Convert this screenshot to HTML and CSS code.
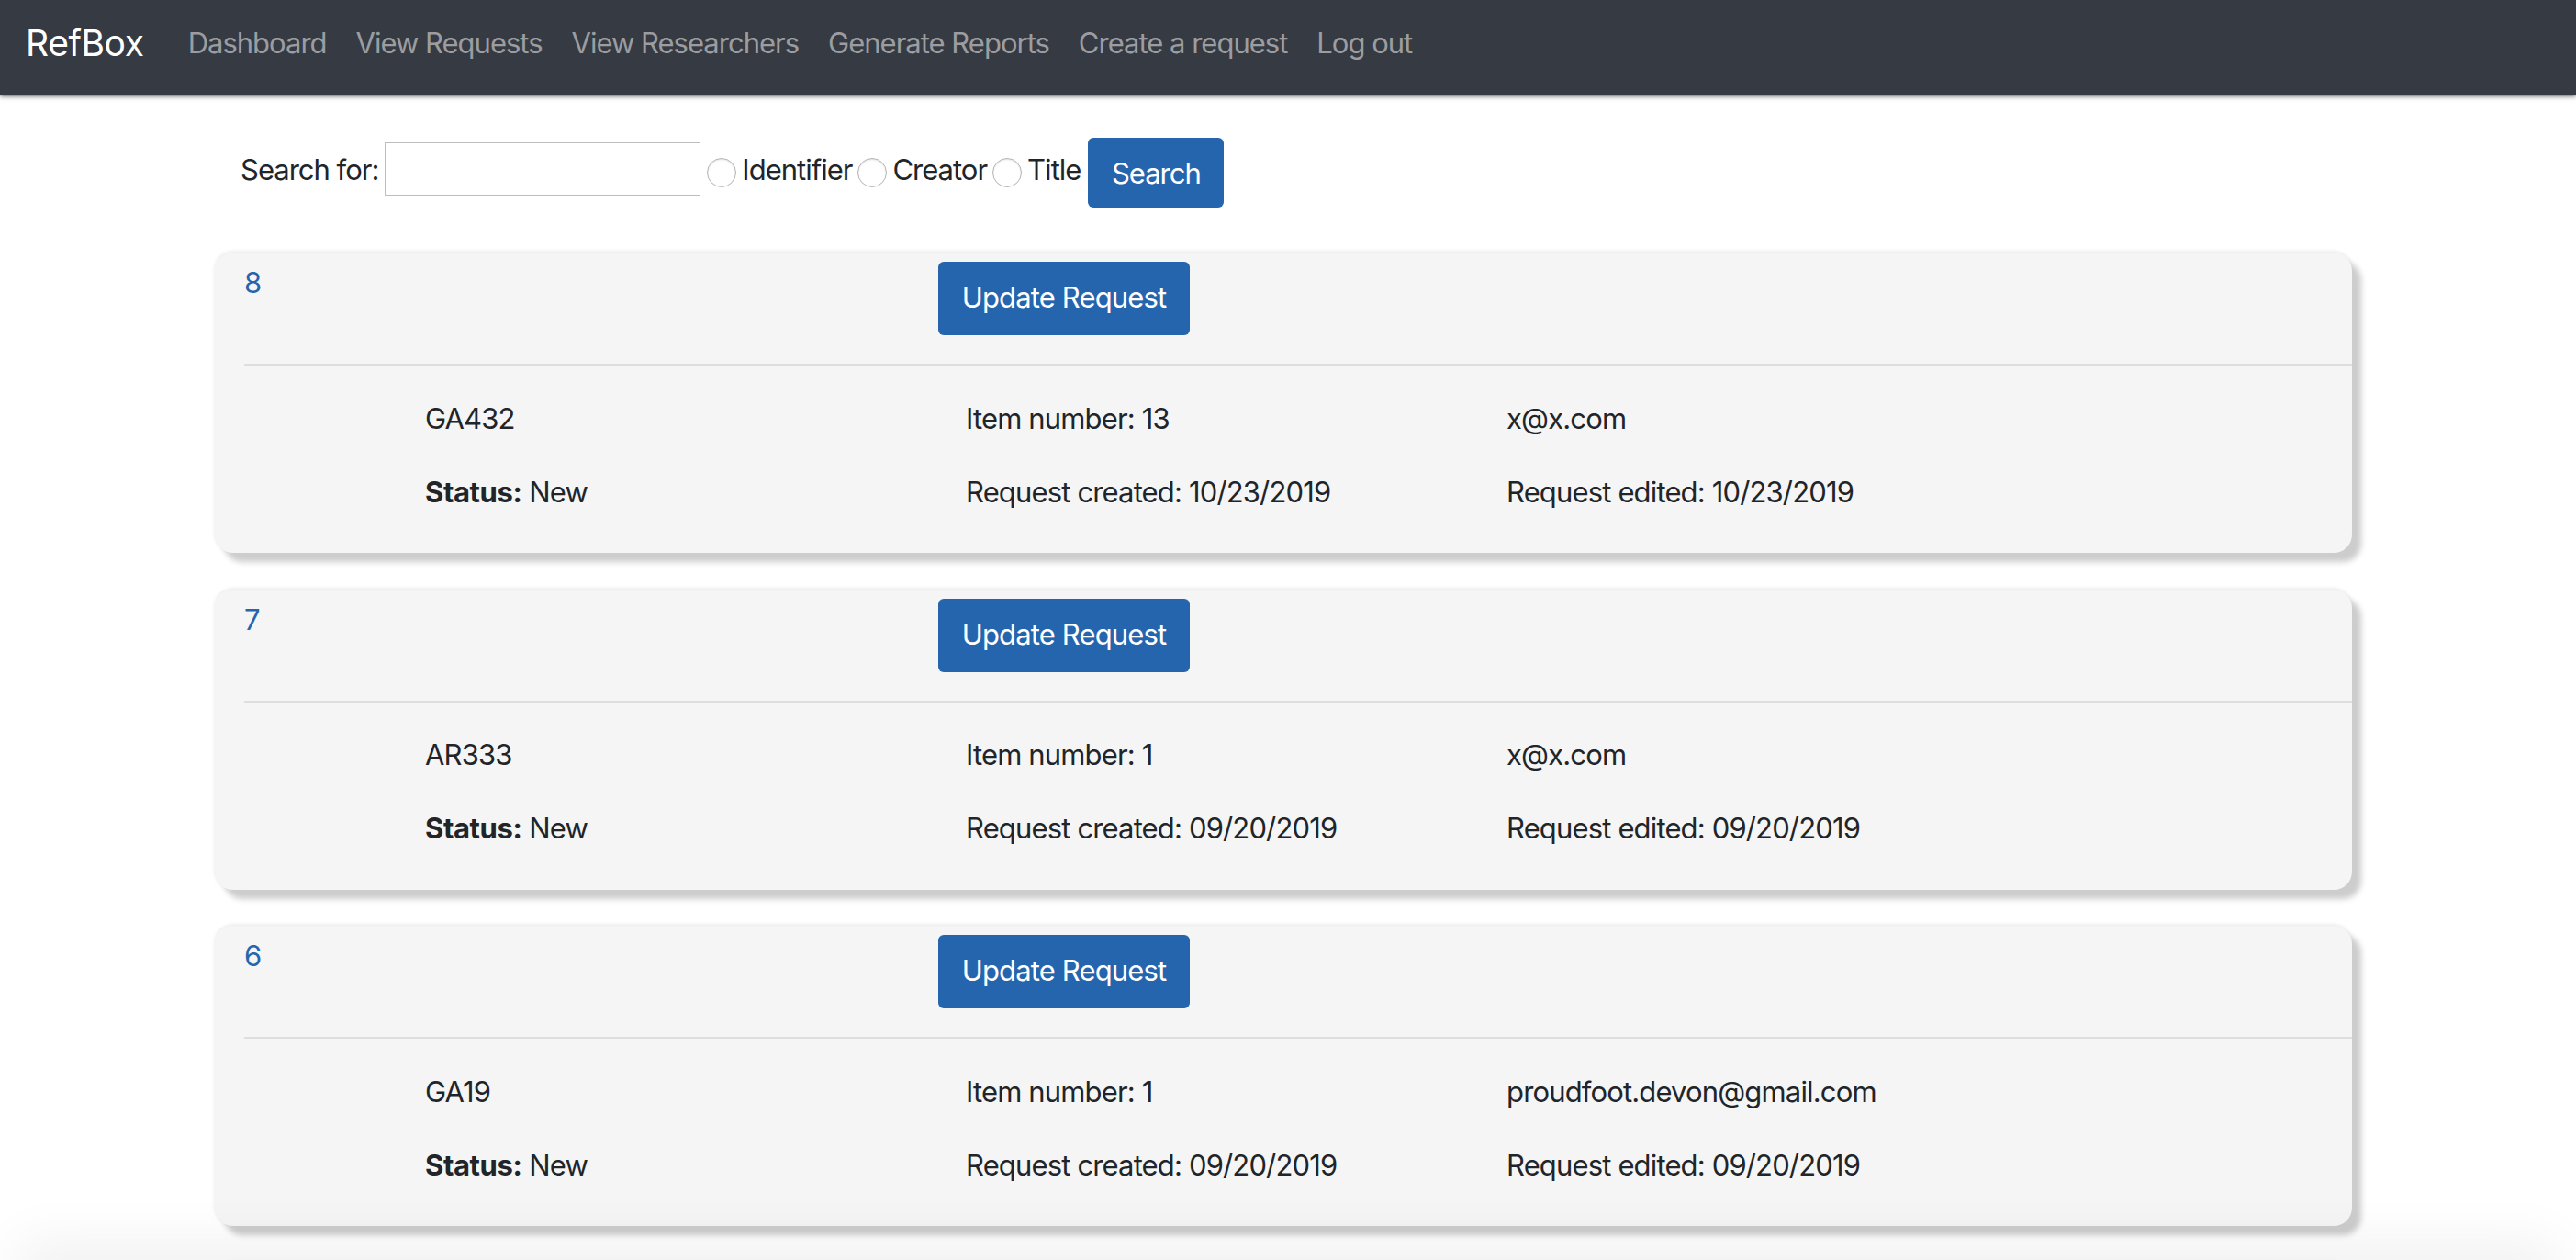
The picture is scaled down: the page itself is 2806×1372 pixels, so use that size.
FILE: index.html
```html
<!DOCTYPE html>
<html lang="en">
<head>
<meta charset="utf-8">
<title>RefBox</title>
<link rel="stylesheet" href="styles.css">
</head>
<body>
<nav class="navbar">
  <a class="brand" href="#">RefBox</a>
  <a class="nav-link" href="#">Dashboard</a>
  <a class="nav-link" href="#">View Requests</a>
  <a class="nav-link" href="#">View Researchers</a>
  <a class="nav-link" href="#">Generate Reports</a>
  <a class="nav-link" href="#">Create a request</a>
  <a class="nav-link" href="#">Log out</a>
</nav>
<main class="content">
  <form class="search">
    <label class="search-label" for="q">Search for:</label>
    <input class="search-input" id="q" type="text">
    <input class="radio" type="radio" name="by" id="r1"><label for="r1">Identifier</label>
    <input class="radio" type="radio" name="by" id="r2"><label for="r2">Creator</label>
    <input class="radio" type="radio" name="by" id="r3"><label for="r3">Title</label>
    <button class="btn btn-search" type="button">Search</button>
  </form>

  <article class="card">
    <header class="card-head">
      <a class="card-id" href="#">8</a>
      <button class="btn btn-update" type="button">Update Request</button>
    </header>
    <div class="card-row">
      <span class="col-a">GA432</span><span class="col-b">Item number: 13</span><span class="col-c">x@x.com</span>
    </div>
    <div class="card-row">
      <span class="col-a"><strong>Status:</strong> New</span><span class="col-b">Request created: 10/23/2019</span><span class="col-c">Request edited: 10/23/2019</span>
    </div>
  </article>

  <article class="card">
    <header class="card-head">
      <a class="card-id" href="#">7</a>
      <button class="btn btn-update" type="button">Update Request</button>
    </header>
    <div class="card-row">
      <span class="col-a">AR333</span><span class="col-b">Item number: 1</span><span class="col-c">x@x.com</span>
    </div>
    <div class="card-row">
      <span class="col-a"><strong>Status:</strong> New</span><span class="col-b">Request created: 09/20/2019</span><span class="col-c">Request edited: 09/20/2019</span>
    </div>
  </article>

  <article class="card">
    <header class="card-head">
      <a class="card-id" href="#">6</a>
      <button class="btn btn-update" type="button">Update Request</button>
    </header>
    <div class="card-row">
      <span class="col-a">GA19</span><span class="col-b">Item number: 1</span><span class="col-c">proudfoot.devon@gmail.com</span>
    </div>
    <div class="card-row">
      <span class="col-a"><strong>Status:</strong> New</span><span class="col-b">Request created: 09/20/2019</span><span class="col-c">Request edited: 09/20/2019</span>
    </div>
  </article>

  <article class="card card-next"></article>
</main>
<div class="bottom-fade"></div>
</body>
</html>
```
FILE: styles.css
```css
html, body {
  margin: 0;
  padding: 0;
  height: 100%;
  overflow: hidden;
  background: #fff;
}
body {
  font-family: Inter, "Liberation Sans", sans-serif;
  font-size: 31px;
  letter-spacing: -0.85px;
  line-height: 45px;
  color: #212529;
}
a { text-decoration: none; }
strong { letter-spacing: -0.4px; }

.navbar {
  display: flex;
  align-items: center;
  height: 103px;
  padding: 0 0 10px 28px;
  box-sizing: border-box;
  background: #363a42;
  box-shadow: 0 2px 5px rgba(0, 0, 0, .55);
  gap: 32px;
}
.brand {
  color: #fff;
  font-size: 39px;
  letter-spacing: -0.4px;
  margin-right: 16px;
}
.nav-link { color: #9b9da0; letter-spacing: -1px; }

.content { padding: 0 244px 0 234px; }

.search {
  display: flex;
  align-items: center;
  height: 76px;
  margin: 47px 0 49px;
  padding-left: 28px;
  letter-spacing: -1px;
}
.search label { position: relative; top: -4px; }
.search-label { margin-right: 7px; }
.search-input {
  width: 344px;
  height: 58px;
  box-sizing: border-box;
  border: 1px solid #bdbdbd;
  background: #fff;
  margin: -8px 7px 0 0;
  padding: 0;
}
.radio {
  appearance: none;
  width: 32px;
  height: 32px;
  margin: 0 6px 0 0;
  border: 1px solid #b5b5b5;
  border-radius: 50%;
  background: #fff;
  box-shadow: inset 0 1px 2px rgba(0, 0, 0, .12);
}
.search label + .radio { margin-left: 6px; }

.btn {
  display: block;
  border: 0;
  border-radius: 6px;
  background: #2565ae;
  color: #fff;
  font: inherit;
  letter-spacing: inherit;
  padding: 0;
  cursor: pointer;
}
.btn-search { width: 148px; height: 76px; margin-left: 8px; }
.btn-update { width: 274px; height: 80px; padding-bottom: 3px; }

.card {
  height: 327px;
  box-sizing: border-box;
  margin-bottom: 39.5px;
  padding-left: 32px;
  background: #f5f5f5;
  border-radius: 20px;
  box-shadow: 10px 10px 6px #cdcdcd, 0 -1px 4px rgba(0, 0, 0, .1);
}
.card-next { margin-bottom: 0; }
.card-head {
  display: flex;
  align-items: flex-start;
  height: 123px;
  padding-top: 10px;
  box-sizing: border-box;
  border-bottom: 2px solid #dedede;
}
.card-id {
  width: 756px;
  color: #2565ae;
  line-height: 46px;
}
.card-row {
  display: flex;
  padding-left: 197px;
  height: 80px;
  align-items: center;
}
.card-head + .card-row { margin-top: 17px; }
.col-a { width: 589px; }
.col-b { width: 589px; }
.bottom-fade {
  position: fixed;
  left: 40px;
  right: 40px;
  bottom: -30px;
  height: 30px;
  box-shadow: 0 0 60px 20px rgba(0, 0, 0, .06);
  pointer-events: none;
}
```
